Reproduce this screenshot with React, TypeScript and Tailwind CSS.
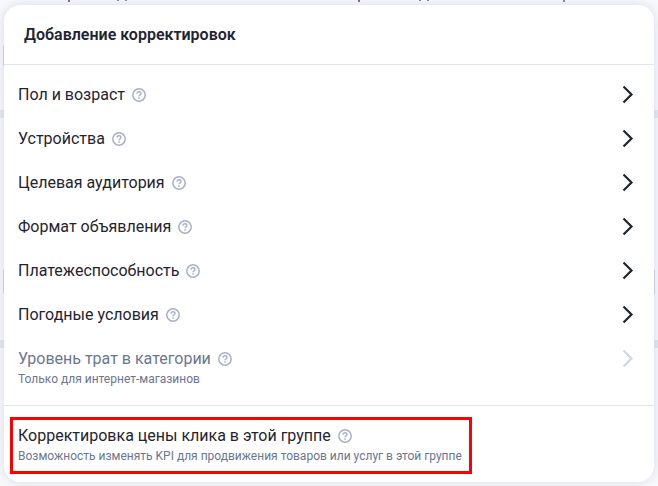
import clsx from "clsx";

type Adjustment = {
  title: string;
  note?: string;
  disabled?: boolean;
};

const adjustments: Adjustment[] = [
  { title: "Пол и возраст" },
  { title: "Устройства" },
  { title: "Целевая аудитория" },
  { title: "Формат объявления" },
  { title: "Платежеспособность" },
  { title: "Погодные условия" },
  {
    title: "Уровень трат в категории",
    note: "Только для интернет-магазинов",
    disabled: true,
  },
];

export default function App() {
  return (
    <div className="relative min-h-screen bg-[#f8f9fc] px-1 pt-[5px] pb-1 font-[Roboto,'Noto_Sans',sans-serif] text-[#1f2433]">
      <Backdrop />

      <section
        aria-labelledby="dialog-title"
        className="relative rounded-2xl bg-white shadow-[0_0_12px_rgba(60,70,130,0.16)]"
      >
        <header className="border-b border-[#e1e4f0] px-5 pt-[18px] pb-[17px]">
          <h1 id="dialog-title" className="text-base leading-6 font-semibold">
            Добавление корректировок
          </h1>
        </header>

        <ul className="pt-2 pb-[18px]">
          {adjustments.map(({ title, note, disabled }) => (
            <li key={title}>
              <button
                type="button"
                disabled={disabled}
                className={clsx(
                  "flex w-full items-start justify-between pr-[15px] pl-3.5 text-left",
                  note ? "pt-2.5" : "py-2.5",
                  disabled && "text-[#6b7690]"
                )}
              >
                <span>
                  <Title text={title} />
                  {note && <Note text={note} />}
                </span>
                <ChevronIcon
                  className={disabled ? "text-[#d3d6e6]" : "text-[#1f2433]"}
                />
              </button>
            </li>
          ))}
        </ul>

        <div className="border-t border-[#e1e4f0] px-1.5 pt-[11px] pb-2">
          <button
            type="button"
            className="block w-[462px] max-w-full border-3 border-[#ff0000] pt-1 pb-[7px] pl-[5px] text-left"
          >
            <Title text="Корректировка цены клика в этой группе" />
            <Note text="Возможность изменять KPI для продвижения товаров или услуг в этой группе" />
          </button>
        </div>
      </section>
    </div>
  );
}

function Title({ text }: { text: string }) {
  return (
    <span className="flex items-center gap-[7px] text-base leading-6">
      {text}
      <HelpIcon />
    </span>
  );
}

function Note({ text }: { text: string }) {
  return (
    <span className="block text-xs leading-4 text-[#6b7690]">{text}</span>
  );
}

/* Slivers of the page that show around the dialog */
function Backdrop() {
  return (
    <div aria-hidden="true" className="absolute inset-0 overflow-hidden">
      <div className="absolute inset-x-0 top-[110px] h-2 bg-[#e4e7f1]" />
      <div className="absolute inset-x-0 top-[340px] h-2 bg-[#e4e7f1]" />
      <div className="absolute right-1 left-[3px] top-[46px] h-5 bg-[#d5d9e8]" />
      <div className="absolute inset-x-[3px] top-[270px] h-6 bg-[#d5d9e8]" />
      <svg width="658" height="3" className="absolute top-0 left-0">
        <path d="M69 0v2M359 0v2" stroke="#8a6f86" strokeWidth="2" />
        <path
          d="M118 0v1M126 0v1M420 0v1M428 0v1M564 0v2"
          stroke="#6f8fc4"
          strokeWidth="2"
        />
      </svg>
    </div>
  );
}

function HelpIcon() {
  return (
    <svg
      width="14"
      height="14"
      viewBox="0 0 14 14"
      fill="none"
      className="shrink-0 text-[#a9b1c8]"
    >
      <circle cx="7" cy="7" r="6.2" stroke="currentColor" strokeWidth="1.5" />
      <path
        d="M5 5.7C5 4.5 5.9 3.8 7 3.8s2 .7 2 1.7c0 1.4-2 1.4-2 2.8"
        stroke="currentColor"
        strokeWidth="1.4"
      />
      <path d="M7 9.2v1.5" stroke="currentColor" strokeWidth="1.5" />
    </svg>
  );
}

function ChevronIcon({ className }: { className: string }) {
  return (
    <svg
      width="24"
      height="24"
      viewBox="0 0 24 24"
      fill="none"
      className={clsx("shrink-0", className)}
    >
      <path
        d="M8.5 3.5l8 8-8 8"
        stroke="currentColor"
        strokeWidth="2.2"
      />
    </svg>
  );
}
